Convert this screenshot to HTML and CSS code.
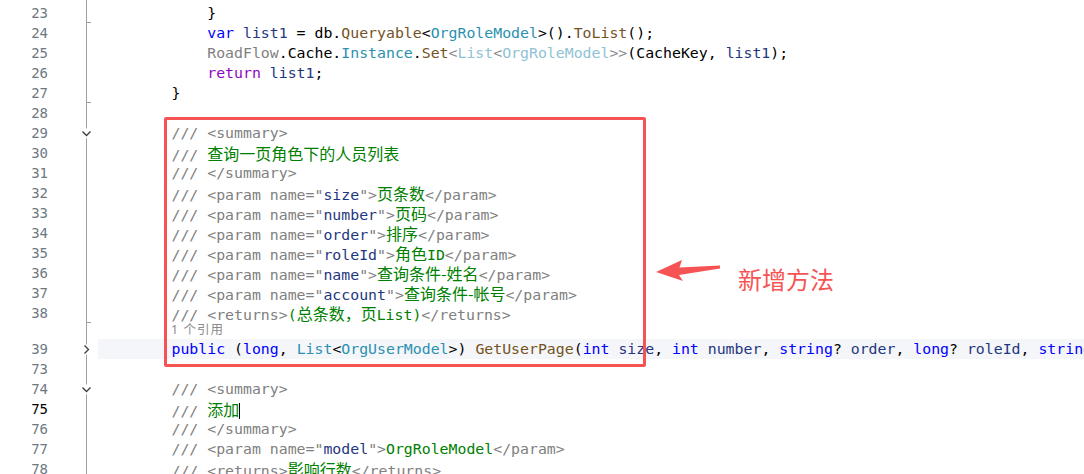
FILE: index.html
```
<!DOCTYPE html>
<html lang="zh-CN">
<head>
    <meta charset="UTF-8">
    <title>OrgRole.cs</title>
    <link rel="stylesheet" href="styles.css">
</head>
<body>
    <div class="editor">
        <div class="row"><span class="ln">22</span><span class="fold"><svg width="13" height="20"><path d="M6.5 0V20"/></svg></span><span class="code">                <span class="p">return</span> <span class="v">list</span>;</span></div>
        <div class="row"><span class="ln">23</span><span class="fold"><svg width="13" height="20"><path d="M6.5 0V20M6.5 19.5H11"/></svg></span><span class="code">            }</span></div>
        <div class="row"><span class="ln">24</span><span class="fold"><svg width="13" height="20"><path d="M6.5 0V20"/></svg></span><span class="code">            <span class="k">var</span> <span class="v">list1</span> = db.<span class="m">Queryable</span>&lt;<span class="t">OrgRoleModel</span>&gt;().<span class="m">ToList</span>();</span></div>
        <div class="row"><span class="ln">25</span><span class="fold"><svg width="13" height="20"><path d="M6.5 0V20"/></svg></span><span class="code">            <span class="ns">RoadFlow</span>.Cache.<span class="t">Instance</span>.<span class="m">Set</span><span class="f">&lt;</span><span class="ft">List</span><span class="f">&lt;</span><span class="ft">OrgRoleModel</span><span class="f">&gt;&gt;</span>(CacheKey, <span class="v">list1</span>);</span></div>
        <div class="row"><span class="ln">26</span><span class="fold"><svg width="13" height="20"><path d="M6.5 0V20"/></svg></span><span class="code">            <span class="p">return</span> <span class="v">list1</span>;</span></div>
        <div class="row"><span class="ln">27</span><span class="fold"><svg width="13" height="20"><path d="M6.5 0V20M6.5 19.5H11"/></svg></span><span class="code">        }</span></div>
        <div class="row"><span class="ln">28</span><span class="fold"><svg width="13" height="20"><path d="M6.5 0V20"/></svg></span><span class="code"></span></div>
        <div class="row"><span class="ln">29</span><span class="fold"><svg width="13" height="20"><path d="M6.5 0V5.5M6.5 15.5V20"/><path class="chev" d="M2.5 8.5L6.5 12.5L10.5 8.5"/></svg></span><span class="code">        <span class="c">/// &lt;summary&gt;</span></span></div>
        <div class="row"><span class="ln">30</span><span class="fold"><svg width="13" height="20"><path d="M6.5 0V20"/></svg></span><span class="code">        <span class="c">/// </span><span class="g zh">查询一页角色下的人员列表</span></span></div>
        <div class="row"><span class="ln">31</span><span class="fold"><svg width="13" height="20"><path d="M6.5 0V20"/></svg></span><span class="code">        <span class="c">/// &lt;/summary&gt;</span></span></div>
        <div class="row"><span class="ln">32</span><span class="fold"><svg width="13" height="20"><path d="M6.5 0V20"/></svg></span><span class="code">        <span class="c">/// &lt;param name="</span><span class="v">size</span><span class="c">"&gt;</span><span class="g zh">页条数</span><span class="c">&lt;/param&gt;</span></span></div>
        <div class="row"><span class="ln">33</span><span class="fold"><svg width="13" height="20"><path d="M6.5 0V20"/></svg></span><span class="code">        <span class="c">/// &lt;param name="</span><span class="v">number</span><span class="c">"&gt;</span><span class="g zh">页码</span><span class="c">&lt;/param&gt;</span></span></div>
        <div class="row"><span class="ln">34</span><span class="fold"><svg width="13" height="20"><path d="M6.5 0V20"/></svg></span><span class="code">        <span class="c">/// &lt;param name="</span><span class="v">order</span><span class="c">"&gt;</span><span class="g zh">排序</span><span class="c">&lt;/param&gt;</span></span></div>
        <div class="row"><span class="ln">35</span><span class="fold"><svg width="13" height="20"><path d="M6.5 0V20"/></svg></span><span class="code">        <span class="c">/// &lt;param name="</span><span class="v">roleId</span><span class="c">"&gt;</span><span class="g zh">角色</span><span class="g">ID</span><span class="c">&lt;/param&gt;</span></span></div>
        <div class="row"><span class="ln">36</span><span class="fold"><svg width="13" height="20"><path d="M6.5 0V20"/></svg></span><span class="code">        <span class="c">/// &lt;param name="</span><span class="v">name</span><span class="c">"&gt;</span><span class="g zh">查询条件-姓名</span><span class="c">&lt;/param&gt;</span></span></div>
        <div class="row"><span class="ln">37</span><span class="fold"><svg width="13" height="20"><path d="M6.5 0V20"/></svg></span><span class="code">        <span class="c">/// &lt;param name="</span><span class="v">account</span><span class="c">"&gt;</span><span class="g zh">查询条件-帐号</span><span class="c">&lt;/param&gt;</span></span></div>
        <div class="row"><span class="ln">38</span><span class="fold"><svg width="13" height="20"><path d="M6.5 0V20M6.5 19.5H11"/></svg></span><span class="code">        <span class="c">/// &lt;returns&gt;</span><span class="g">(</span><span class="g zh">总条数，页</span><span class="g">List)</span><span class="c">&lt;/returns&gt;</span></span></div>
        <div class="row lens"><span class="ln"></span><span class="fold"><svg width="13" height="16"><path d="M6.5 0V16"/></svg></span><span class="code">1 个引用</span></div>
        <div class="row current"><span class="ln">39</span><span class="fold"><svg width="13" height="20"><path d="M6.5 0V5.5M6.5 15.5V20"/><path class="chev" d="M4.5 6.5L8.5 10.5L4.5 14.5"/></svg></span><span class="code">        <span class="k">public</span> (<span class="k">long</span>, <span class="t">List</span>&lt;<span class="t">OrgUserModel</span>&gt;) <span class="m">GetUserPage</span>(<span class="k">int</span> <span class="v">size</span>, <span class="k">int</span> <span class="v">number</span>, <span class="k">string</span>? <span class="v">order</span>, <span class="k">long</span>? <span class="v">roleId</span>, <span class="k">string</span>? <span class="v">name</span>, <span class="k">string</span>? <span class="v">account</span>)</span></div>
        <div class="row"><span class="ln">73</span><span class="fold"><svg width="13" height="20"><path d="M6.5 0V20"/></svg></span><span class="code"></span></div>
        <div class="row"><span class="ln">74</span><span class="fold"><svg width="13" height="20"><path d="M6.5 0V5.5M6.5 15.5V20"/><path class="chev" d="M2.5 8.5L6.5 12.5L10.5 8.5"/></svg></span><span class="code">        <span class="c">/// &lt;summary&gt;</span></span></div>
        <div class="row"><span class="ln active">75</span><span class="fold"><svg width="13" height="20"><path d="M6.5 0V20"/></svg></span><span class="code">        <span class="c">/// </span><span class="g zh">添加</span><span class="caret"></span></span></div>
        <div class="row"><span class="ln">76</span><span class="fold"><svg width="13" height="20"><path d="M6.5 0V20"/></svg></span><span class="code">        <span class="c">/// &lt;/summary&gt;</span></span></div>
        <div class="row"><span class="ln">77</span><span class="fold"><svg width="13" height="20"><path d="M6.5 0V20"/></svg></span><span class="code">        <span class="c">/// &lt;param name="</span><span class="v">model</span><span class="c">"&gt;</span><span class="g">OrgRoleModel</span><span class="c">&lt;/param&gt;</span></span></div>
        <div class="row"><span class="ln">78</span><span class="fold"><svg width="13" height="20"><path d="M6.5 0V20"/></svg></span><span class="code">        <span class="c">/// &lt;returns&gt;</span><span class="g zh">影响行数</span><span class="c">&lt;/returns&gt;</span></span></div>
    </div>

    <!-- 标注 -->
    <div class="mark-box"></div>
    <svg class="mark-arrow" width="70" height="30" viewBox="0 0 70 30">
        <path d="M2 16L28 4L25.5 11.5L66 9.5L66 12.5L25 19L29 25Z"/>
    </svg>
    <div class="mark-label">新增方法</div>
</body>
</html>
```

FILE: styles.css
```
body {
    margin: 0;
    background: #fff;
    width: 1084px;
    height: 474px;
    overflow: hidden;
    font-family: "DejaVu Sans Mono", "Noto Sans CJK SC", monospace;
    font-size: 14.85px;
    color: #000;
}

.editor {
    margin-top: -17px;
}

.row {
    display: flex;
    height: 20px;
    line-height: 20px;
}

.ln {
    width: 48px;
    flex: none;
    text-align: right;
    font-size: 14px;
    color: #6f7880;
}

.ln.active {
    color: #000;
}

.fold {
    width: 50px;
    flex: none;
    padding-left: 32px;
    box-sizing: border-box;
}

.fold svg {
    display: block;
    fill: none;
    stroke: #a0a0a0;
    stroke-width: 1;
}

.fold svg .chev {
    stroke: #3c3c3c;
    stroke-width: 1.3;
}

.code {
    flex: 1;
    padding-left: 2px;
    white-space: pre;
    overflow: hidden;
}

.row.current .code {
    background: #f5f6f9;
}

/* CodeLens */
.row.lens {
    height: 16px;
    line-height: 14px;
}

.row.lens .code {
    padding-left: 73px;
    font-family: "Noto Sans", "Noto Sans CJK SC", sans-serif;
    font-size: 12.5px;
    letter-spacing: 1px;
    color: #8a8a8a;
}

/* 语法颜色 */
.k { color: #0000ff; }
.t { color: #2b91af; }
.m { color: #74531f; }
.v { color: #1f377f; }
.p { color: #8f08c4; }
.c { color: #808080; }
.g { color: #008000; }
.ns { color: #7f7f7f; }
.f { color: #8c8c8c; }
.ft { color: #8fc2d6; }

.zh {
    font-family: "Noto Sans CJK SC", sans-serif;
    font-size: 16px;
}

.caret {
    display: inline-block;
    width: 1px;
    height: 17px;
    background: #000;
    vertical-align: -4px;
}

/* 红色标注 */
.mark-box {
    position: absolute;
    left: 164px;
    top: 117px;
    width: 482px;
    height: 250px;
    box-sizing: border-box;
    border: 3px solid #f65454;
    border-radius: 2px;
}

.mark-arrow {
    position: absolute;
    left: 654px;
    top: 256px;
    fill: #f65454;
}

.mark-label {
    position: absolute;
    left: 738px;
    top: 267px;
    font-family: "Noto Sans CJK SC", sans-serif;
    font-size: 24px;
    line-height: 24px;
    color: #f65454;
}
```
